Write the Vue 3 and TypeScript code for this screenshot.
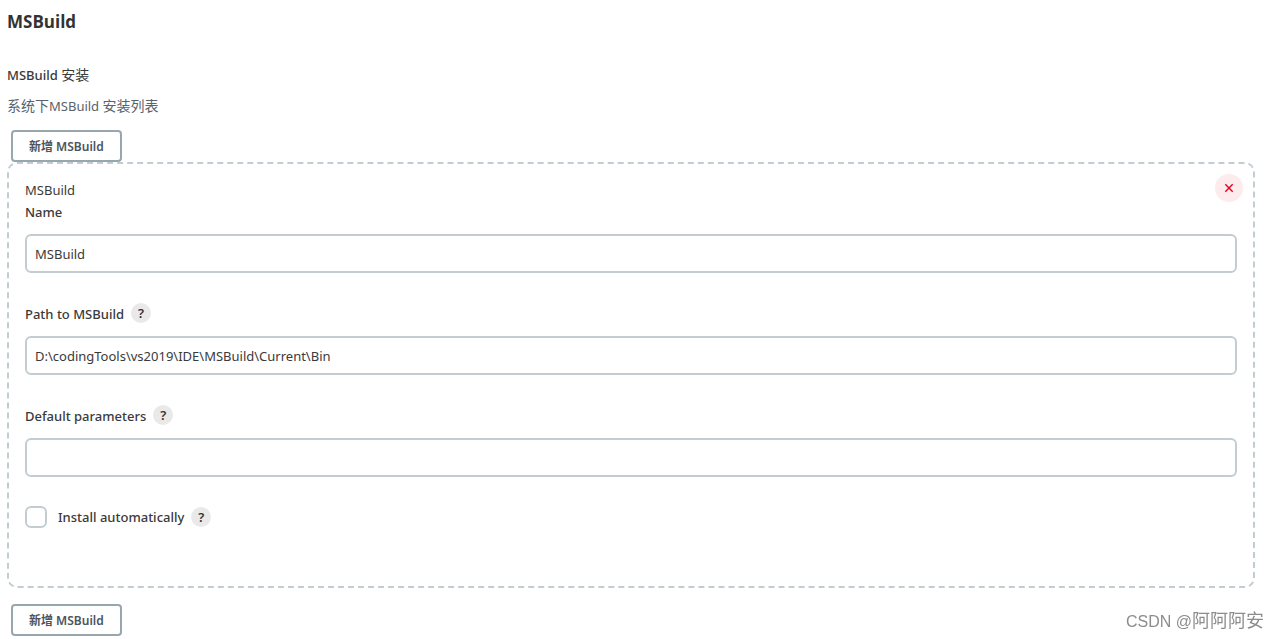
<script setup lang="ts">
import { ref } from 'vue'

interface Field {
  id: string
  label: string
  value: string
  help: boolean
}

const fields = ref<Field[]>([
  { id: 'name', label: 'Name', value: 'MSBuild', help: false },
  { id: 'home', label: 'Path to MSBuild', value: 'D:\\codingTools\\vs2019\\IDE\\MSBuild\\Current\\Bin', help: true },
  { id: 'params', label: 'Default parameters', value: '', help: true },
])
const autoInstall = ref(false)
</script>

<template>
  <main class="page">
    <h1 class="title">MSBuild</h1>
    <h2 class="subtitle">MSBuild <span class="cjk">安装</span></h2>
    <p class="description"><span class="cjk">系统下</span>MSBuild <span class="cjk">安装列表</span></p>

    <button type="button" class="add">新增 MSBuild</button>
    <section class="panel">
      <button type="button" class="remove" aria-label="Delete">
        <svg viewBox="0 0 10 10" width="10" height="10" aria-hidden="true">
          <path d="M1.3 1.3 8.7 8.7M8.7 1.3 1.3 8.7" fill="none" stroke="currentColor" stroke-width="1.4" />
        </svg>
      </button>
      <div class="kind">MSBuild</div>
      <div v-for="field in fields" :key="field.id" class="field">
        <div class="label-row">
          <label :for="field.id">{{ field.label }}</label>
          <button v-if="field.help" type="button" class="help">?</button>
        </div>
        <input :id="field.id" v-model="field.value" type="text" class="text" />
      </div>
      <div class="check-row">
        <input id="auto" v-model="autoInstall" type="checkbox" class="check" />
        <label for="auto">Install automatically</label>
        <button type="button" class="help">?</button>
      </div>
    </section>
    <button type="button" class="add last">新增 MSBuild</button>
    <div class="watermark">CSDN @<span class="author">阿阿阿安</span></div>
  </main>
</template>

<style>
body {
  margin: 0;
  background: #fff;
}
</style>

<style scoped>
.page {
  padding: 9px 24px 3px 7px;
  color: #3a3a3a;
  font: 13px/20px "Noto Sans", "Noto Sans CJK SC", sans-serif;
}
.page * {
  box-sizing: border-box;
}
.title {
  margin: 0;
  color: #333;
  font-family: "Open Sans", sans-serif;
  font-size: 17px;
  line-height: 26px;
  font-weight: 700;
}
.subtitle {
  margin: 30px 0 0;
  font-size: 13px;
  line-height: 20px;
  font-weight: 500;
}
.cjk {
  font-family: "Noto Sans CJK SC", sans-serif;
  font-size: 14px;
  line-height: 16px;
  font-weight: 400;
}
.description {
  margin: 11px 0 14px;
  color: #5a626c;
}
button {
  font-family: inherit;
  cursor: pointer;
}
.add {
  display: block;
  height: 32px;
  margin-left: 4px;
  padding: 2px 16px 0;
  border: 2px solid #98a6ae;
  border-radius: 4px;
  background: #fff;
  color: #4d545d;
  font-size: 12px;
  line-height: 20px;
  font-weight: 600;
}
.last {
  margin-top: 16px;
}
.panel {
  position: relative;
  padding: 17px 16px 58px;
  border: 2px dashed #c3cdd1;
  border-radius: 10px;
}
.remove {
  position: absolute;
  top: 10px;
  right: 10px;
  display: flex;
  align-items: center;
  justify-content: center;
  width: 28px;
  height: 28px;
  padding: 0;
  border: 0;
  border-radius: 50%;
  background: #fdebed;
  color: #e6001f;
}
.kind {
  line-height: 19px;
}
.field {
  margin-bottom: 29px;
}
.label-row {
  display: flex;
  align-items: center;
  gap: 7px;
  height: 22px;
  margin-bottom: 12px;
}
.label-row label {
  padding-top: 2px;
}
.field label,
.check-row label {
  font-weight: 500;
}
.help {
  width: 20px;
  height: 20px;
  padding: 0;
  border: 0;
  border-radius: 50%;
  background: #e9e9e9;
  color: #333;
  font-size: 13px;
  line-height: 20px;
  font-weight: 600;
}
.text {
  display: block;
  width: 100%;
  height: 39px;
  padding: 0 8px;
  border: 2px solid #c3cdd1;
  border-radius: 6px;
  background: #fff;
  color: #3a3a3a;
  font: inherit;
  outline: 0;
}
.check-row {
  display: flex;
  align-items: center;
  gap: 7px;
}
.check {
  appearance: none;
  width: 22px;
  height: 22px;
  margin: 0 4px 0 0;
  border: 2px solid #c3cdd1;
  border-radius: 6px;
  background: #fff;
}
.watermark {
  position: fixed;
  right: 15px;
  bottom: 5px;
  color: #8c8c8c;
  font: 16px/24px "Liberation Sans", "Noto Sans CJK SC", sans-serif;
}
.author {
  font-size: 18px;
}
</style>
